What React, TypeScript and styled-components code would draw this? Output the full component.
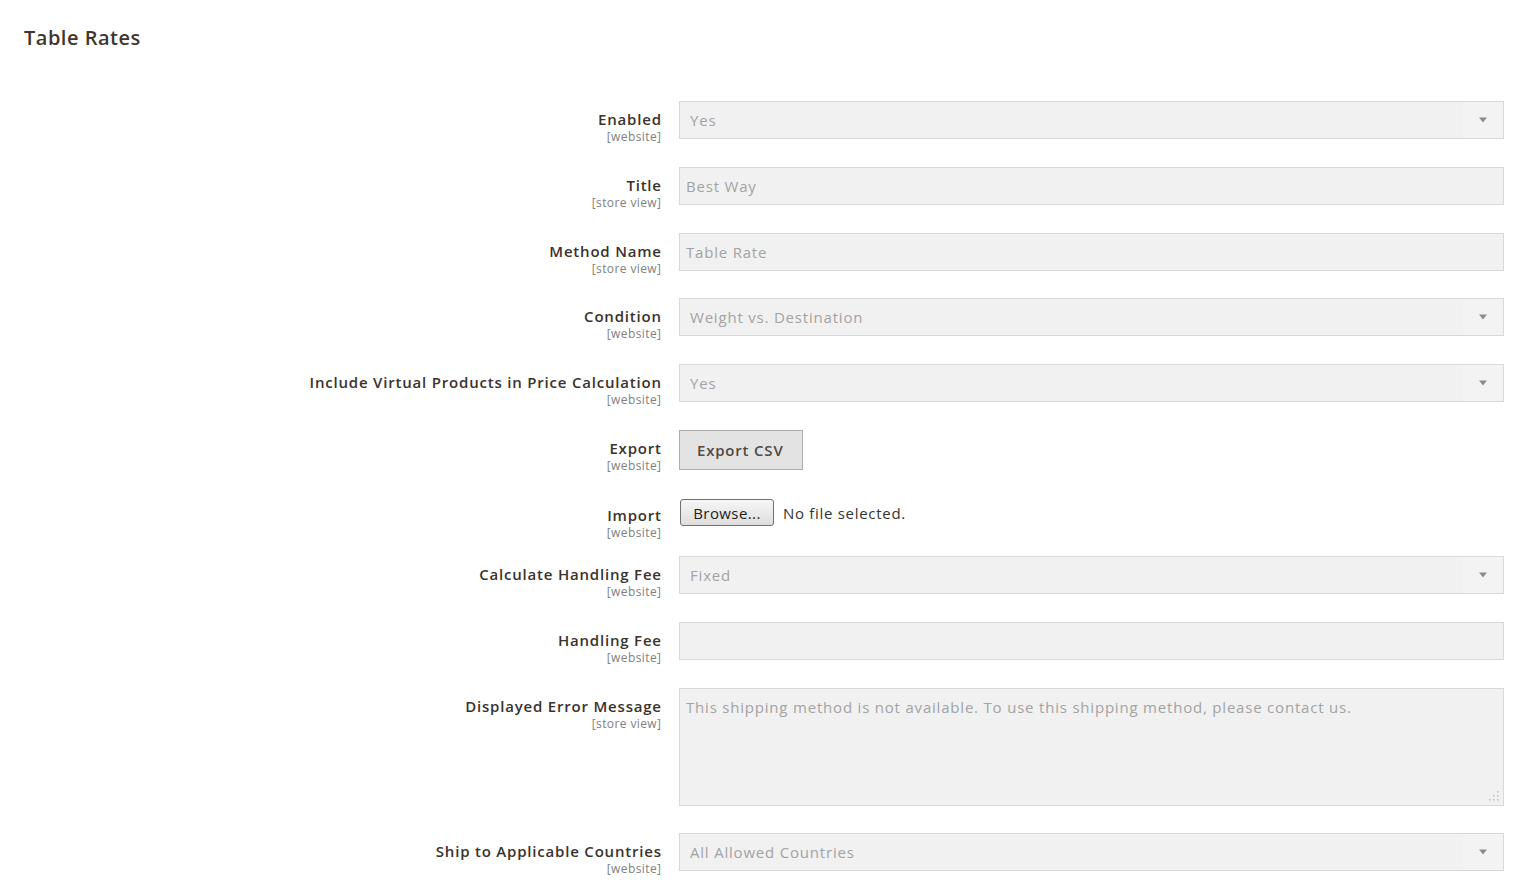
import styled, { createGlobalStyle } from "styled-components";

type FieldKind = "select" | "input" | "textarea" | "export" | "import";

interface FieldRow {
  label: string;
  scope: string;
  kind: FieldKind;
  value?: string;
  gap?: number;
  offset?: number;
}

const rows: FieldRow[] = [
  { label: "Enabled", scope: "[website]", kind: "select", value: "Yes" },
  { label: "Title", scope: "[store view]", kind: "input", value: "Best Way" },
  { label: "Method Name", scope: "[store view]", kind: "input", value: "Table Rate" },
  { label: "Condition", scope: "[website]", kind: "select", value: "Weight vs. Destination" },
  {
    label: "Include Virtual Products in Price Calculation",
    scope: "[website]",
    kind: "select",
    value: "Yes",
  },
  { label: "Export", scope: "[website]", kind: "export" },
  { label: "Import", scope: "[website]", kind: "import", offset: 1.5, gap: 14 },
  { label: "Calculate Handling Fee", scope: "[website]", kind: "select", value: "Fixed" },
  { label: "Handling Fee", scope: "[website]", kind: "input", value: "" },
  {
    label: "Displayed Error Message",
    scope: "[store view]",
    kind: "textarea",
    value: "This shipping method is not available. To use this shipping method, please contact us.",
    gap: 27,
  },
  {
    label: "Ship to Applicable Countries",
    scope: "[website]",
    kind: "select",
    value: "All Allowed Countries",
  },
];

const GlobalStyle = createGlobalStyle`
  body {
    margin: 0;
    background: #ffffff;
    font-family: "Open Sans", "Liberation Sans", sans-serif;
    overflow: hidden;
  }
`;

const Page = styled.div`
  padding: 26px 0 0 0;
`;

const SectionTitle = styled.h2`
  margin: 0 0 51px 24px;
  font-size: 20px;
  line-height: 24px;
  font-weight: 600;
  letter-spacing: 0.5px;
  color: #41362f;
`;

const Form = styled.div`
  display: flex;
  flex-direction: column;
`;

const Row = styled.div<{ $gap?: number; $offset?: number }>`
  display: grid;
  grid-template-columns: 661px 825px;
  column-gap: 18px;
  align-items: start;
  margin-top: ${(p) => p.$offset ?? 0}px;
  margin-bottom: ${(p) => p.$gap ?? 20.75}px;
`;

const LabelCell = styled.div`
  display: flex;
  flex-direction: column;
  align-items: flex-end;
  text-align: right;
  padding-top: 9px;
`;

const Label = styled.span`
  font-size: 15px;
  line-height: 18px;
  font-weight: 600;
  letter-spacing: 0.8px;
  margin-right: -0.8px;
  color: #3a322c;
`;

const Scope = styled.span`
  font-size: 12px;
  line-height: 18px;
  letter-spacing: 0.4px;
  margin-right: -0.4px;
  color: #808080;
`;

const Control = styled.div`
  display: flex;
  align-items: center;
`;

const FieldText = styled.div`
  box-sizing: border-box;
  width: 100%;
  background: #f1f1f1;
  border: 1px solid #d9d9d9;
  color: #a3a3a3;
  font-size: 15px;
  letter-spacing: 0.8px;
`;

const SelectBox = styled(FieldText)`
  height: 38px;
  display: flex;
  align-items: stretch;
`;

const SelectValue = styled.span`
  flex: 1;
  display: flex;
  align-items: center;
  padding-left: 10px;
`;

const ArrowZone = styled.span`
  width: 40px;
  display: flex;
  align-items: center;
  justify-content: center;
  background: #f3f3f3;
`;

const TextBox = styled(FieldText)`
  height: 38px;
  display: flex;
  align-items: center;
  padding-left: 6px;
`;

const TextAreaBox = styled(FieldText)`
  position: relative;
  height: 118px;
  padding: 7px 6px;
  line-height: 22px;
`;

const ResizeGrip = styled.svg`
  position: absolute;
  right: 3px;
  bottom: 3px;
`;

const ExportButton = styled.button`
  box-sizing: border-box;
  height: 40px;
  width: 124px;
  padding: 0 17px;
  background: #e3e3e3;
  border: 1px solid #adadad;
  color: #514943;
  font-family: inherit;
  font-size: 15px;
  font-weight: 600;
  letter-spacing: 0.8px;
  text-align: left;
`;

const BrowseButton = styled.button`
  box-sizing: border-box;
  height: 27px;
  width: 94px;
  margin: 2px 0 0 1px;
  padding: 0;
  border: 1px solid #707070;
  border-radius: 3px;
  background: linear-gradient(#f6f6f6, #dedede);
  color: #222;
  font-family: inherit;
  font-size: 15px;
  letter-spacing: 0.4px;
`;

const FileNote = styled.span`
  margin: 2px 0 0 9px;
  font-size: 15px;
  letter-spacing: 0.7px;
  color: #333;
`;

function Arrow() {
  return (
    <svg width="8" height="6" viewBox="0 0 8 6">
      <path d="M0 0.5 H8 L4 5.5 Z" fill="#8c8c8c" />
    </svg>
  );
}

function renderControl(row: FieldRow) {
  switch (row.kind) {
    case "select":
      return (
        <SelectBox>
          <SelectValue>{row.value}</SelectValue>
          <ArrowZone>
            <Arrow />
          </ArrowZone>
        </SelectBox>
      );
    case "input":
      return <TextBox>{row.value}</TextBox>;
    case "textarea":
      return (
        <TextAreaBox>
          {row.value}
          <ResizeGrip width="12" height="12" viewBox="0 0 12 12">
            {[
              [10, 2],
              [10, 6],
              [10, 10],
              [6, 6],
              [6, 10],
              [2, 10],
            ].map(([x, y]) => (
              <rect key={`${x}-${y}`} x={x - 1} y={y - 1} width="1.5" height="1.5" fill="#bdbdbd" />
            ))}
          </ResizeGrip>
        </TextAreaBox>
      );
    case "export":
      return <ExportButton>Export CSV</ExportButton>;
    case "import":
      return (
        <>
          <BrowseButton>Browse...</BrowseButton>
          <FileNote>No file selected.</FileNote>
        </>
      );
  }
}

export default function App() {
  return (
    <Page>
      <GlobalStyle />
      <SectionTitle>Table Rates</SectionTitle>
      <Form>
        {rows.map((row) => (
          <Row key={row.label} $gap={row.gap} $offset={row.offset}>
            <LabelCell>
              <Label>{row.label}</Label>
              <Scope>{row.scope}</Scope>
            </LabelCell>
            <Control>{renderControl(row)}</Control>
          </Row>
        ))}
      </Form>
    </Page>
  );
}
